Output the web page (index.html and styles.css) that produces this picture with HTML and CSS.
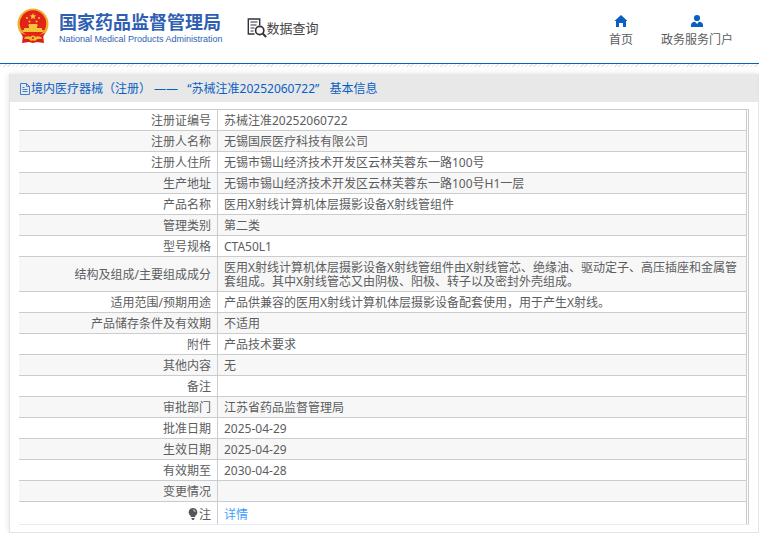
FILE: index.html
```html
<!DOCTYPE html>
<html lang="zh-CN">
<head>
<meta charset="utf-8">
<title>国家药品监督管理局 数据查询</title>
<link rel="stylesheet" href="styles.css">
</head>
<body>
<header class="site-header">
  <a class="brand" href="#">
    <svg class="emblem" viewBox="0 0 34 36" aria-hidden="true">
      <path d="M7 27 L6 35 L13 34 L17 35 L21 34 L28 35 L27 27 Z" fill="#d91f17"/>
      <circle cx="17" cy="16" r="15.5" fill="#efb22d"/>
      <circle cx="17" cy="15.5" r="13.2" fill="#e2231a"/>
      <path d="M17 5l.9 2.300 2.400.1-1.900 1.500.7 2.300-2.100-1.300-2.100 1.300.7-2.300-1.900-1.500 2.400-.1z" fill="#f8cf3c"/>
      <g fill="#f8cf3c"><circle cx="11" cy="10" r="1"/><circle cx="23" cy="10" r="1"/><circle cx="13.500" cy="13.500" r="1"/><circle cx="20.500" cy="13.500" r="1"/></g>
      <path d="M12 18l1-2h8l1 2h-1v2h5v2h2l-1 2H7l-1-2h2v-2h5v-2z" fill="#f5c338"/>
      <path d="M5 25q12 5 24 0l-2 4q-10 4-20 0z" fill="#e2231a"/>
      <path d="M9 29q4-2 8 1 4-3 8-1l1 2q-5-1-7 2l-2-1-2 1q-2-3-7-2z" fill="#f3bd32"/>
      <circle cx="17" cy="30" r="2.500" fill="#f3bd32"/>
      <circle cx="17" cy="30" r="1" fill="#d91f17"/>
    </svg>
    <span class="brand-text">
      <span class="brand-cn">国家药品监督管理局</span>
      <span class="brand-en">National Medical Products Administration</span>
    </span>
  </a>
  <a class="query" href="#">
    <svg class="query-icon" viewBox="0 0 20 20" fill="none" stroke="#35323f" aria-hidden="true">
      <path d="M7.500 16H1.300V1H12.700V7.500" stroke-width="1.400"/>
      <path d="M3.500 4h7M3.500 7h6M3.500 10h4M3.500 13h3" stroke-width="1"/>
      <circle cx="12.700" cy="12.500" r="4.100" stroke-width="1.700"/>
      <path d="M15.700 15.500l3.500 3.500" stroke-width="2"/>
    </svg>
    <span>数据查询</span>
  </a>
  <nav class="site-nav">
    <a href="#">
      <svg class="nav-icon" viewBox="0 0 14 14" fill="#0a5fc4" aria-hidden="true"><path d="M7 1L0.500 7H2v6h3V9h4v4h3V7h1.500z"/></svg>
      <span>首页</span>
    </a>
    <a href="#">
      <svg class="nav-icon" viewBox="0 0 14 14" fill="#0a5fc4" aria-hidden="true"><circle cx="7" cy="4" r="3.100"/><path d="M1 13V11q0-3 4-3.300L7 10l2-2.300q4 .3 4 3.300v2z"/></svg>
      <span>政务服务门户</span>
    </a>
  </nav>
</header>
<main class="panel">
  <h1 class="panel-title">
    <svg class="doc-icon" viewBox="0 0 12 12" fill="none" stroke="#3f7fd0" aria-hidden="true"><path d="M1.500.5H7.500L10.500 3.500V11.500H1.500zM7.500.5v3h3M3.500 4.500h2M3.500 6.500h5M3.500 8.500h5"/></svg>
    <span>境内医疗器械（注册） —— </span><span class="subject">“苏械注准20252060722”</span><span>基本信息</span>
  </h1>
  <div class="table-frame">
    <table class="detail">
      <tbody>
        <tr><th scope="row">注册证编号</th><td>苏械注准20252060722</td></tr>
        <tr><th scope="row">注册人名称</th><td>无锡国辰医疗科技有限公司</td></tr>
        <tr><th scope="row">注册人住所</th><td>无锡市锡山经济技术开发区云林芙蓉东一路100号</td></tr>
        <tr><th scope="row">生产地址</th><td>无锡市锡山经济技术开发区云林芙蓉东一路100号H1一层</td></tr>
        <tr><th scope="row">产品名称</th><td>医用X射线计算机体层摄影设备X射线管组件</td></tr>
        <tr><th scope="row">管理类别</th><td>第二类</td></tr>
        <tr><th scope="row">型号规格</th><td>CTA50L1</td></tr>
        <tr><th scope="row">结构及组成/主要组成成分</th><td>医用X射线计算机体层摄影设备X射线管组件由X射线管芯、绝缘油、驱动定子、高压插座和金属管套组成。其中X射线管芯又由阴极、阳极、转子以及密封外壳组成。</td></tr>
        <tr><th scope="row">适用范围/预期用途</th><td>产品供兼容的医用X射线计算机体层摄影设备配套使用，用于产生X射线。</td></tr>
        <tr><th scope="row">产品储存条件及有效期</th><td>不适用</td></tr>
        <tr><th scope="row">附件</th><td>产品技术要求</td></tr>
        <tr><th scope="row">其他内容</th><td>无</td></tr>
        <tr><th scope="row">备注</th><td></td></tr>
        <tr><th scope="row">审批部门</th><td>江苏省药品监督管理局</td></tr>
        <tr><th scope="row">批准日期</th><td>2025-04-29</td></tr>
        <tr><th scope="row">生效日期</th><td>2025-04-29</td></tr>
        <tr><th scope="row">有效期至</th><td>2030-04-28</td></tr>
        <tr><th scope="row">变更情况</th><td></td></tr>
        <tr class="note"><th scope="row"><svg class="bulb" viewBox="0 0 10 12" aria-hidden="true"><path d="M5 0a4.300 4.300 0 0 1 2.500 7.800L7 9H3l-.5-1.200A4.300 4.300 0 0 1 5 0zM3.500 10h3v1l-1 1h-1l-1-1z" fill="#555"/><path d="M5 1.800q2 .2 2.300 2.200" fill="none" stroke="#ddd"/></svg>注</th><td><a href="#">详情</a></td></tr>
      </tbody>
    </table>
  </div>
</main>
</body>
</html>
```
FILE: styles.css
```css
* {
  box-sizing: border-box;
}

body {
  margin: 0;
  background: #fff;
  color: #5c5d60;
  font: 12px/14px "Noto Sans", "Noto Sans CJK SC", sans-serif;
}

a {
  color: inherit;
  text-decoration: none;
}

svg {
  display: block;
  flex: none;
}

.site-header {
  display: flex;
  align-items: flex-start;
  height: 68px;
  padding: 8px 26px 0 16px;
  background:
    linear-gradient(#0a5fb8, #0a5fb8) 0 63px / 100% 1px no-repeat,
    repeating-linear-gradient(135deg, #fff 0 1px, #e6e6e6 1px 2px, #fff 2px 3px) 0 64px / 100% 3px no-repeat;
}

.brand {
  display: flex;
  gap: 9px;
  color: #2f5fb3;
}

.emblem {
  width: 34px;
  height: 36px;
}

.brand-text {
  display: flex;
  flex-direction: column;
  padding-top: 4px;
}

.brand-cn {
  font-size: 18px;
  font-weight: 700;
  line-height: 20px;
}

.brand-en {
  font: 400 9px/14px "Liberation Sans", Arial, sans-serif;
}

.query {
  display: flex;
  align-items: center;
  margin: 10px 0 0 24px;
  color: #444;
  font-size: 13px;
  line-height: 18px;
}

.query-icon {
  width: 20px;
  height: 20px;
}

.site-nav {
  display: flex;
  gap: 28px;
  margin: 6px 0 0 auto;
}

.site-nav a {
  display: flex;
  flex-direction: column;
  align-items: center;
  gap: 4px;
  line-height: 16px;
}

.nav-icon {
  width: 14px;
  height: 14px;
}

.panel {
  margin: 6px 0 0 9px;
  padding-bottom: 7px;
  border: 1px solid #e4e4e4;
  border-top: 0;
  box-shadow: 0 0 6px rgba(0, 0, 0, 0.12);
}

.panel-title {
  display: flex;
  align-items: center;
  height: 28px;
  margin: 0;
  padding: 2px 0 0 9px;
  background: #e8e8e8;
  color: #0a5fc4;
  font-size: 12px;
  font-weight: 400;
  white-space: pre;
}

.doc-icon {
  width: 12px;
  height: 12px;
}

.subject {
  margin: 0 10px 0 6px;
}

.table-frame {
  margin: 7px 9px 0;
  padding-right: 1px;
  border-top: 1px solid #ccc;
  border-right: 1px solid #ccc;
  border-bottom: 1px solid #e6eaf5;
}

.detail {
  width: 100%;
  border-collapse: separate;
  border-spacing: 0;
  border-right: 1px solid #ccc;
}

.detail th,
.detail td {
  height: 21px;
  padding: 4px 6px 2px;
  border-bottom: 1px solid #ccc;
  font-weight: 400;
}

.detail th {
  width: 199px;
  border-right: 1px solid #ccc;
  text-align: right;
}

.detail tr:nth-child(even) {
  background: #f7f7f7;
}

.detail .note th,
.detail .note td {
  height: 22px;
  padding-top: 6px;
  border-bottom: 0;
}

.note a {
  color: #409eff;
}

.bulb {
  display: inline-block;
  width: 10px;
  height: 12px;
  margin-right: 1px;
  vertical-align: -1px;
}
```
